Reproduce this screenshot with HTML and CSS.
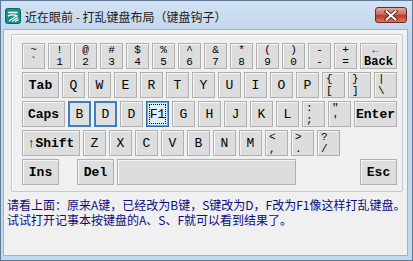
FILE: index.html
```html
<!DOCTYPE html>
<html lang="zh-CN">
  <head>
    <meta charset="UTF-8" />
    <meta name="viewport" content="width=device-width, initial-scale=1.0" />
    <title>近在眼前 - 打乱键盘布局（键盘钩子）</title>
    <link rel="stylesheet" href="styles.css">
  </head>
  <body>
    <div class="window">
      <!-- Title bar -->
      <div class="titlebar">
        <svg class="app-icon" width="16" height="16" viewBox="0 0 16 16">
          <rect x="0.5" y="0.5" width="15" height="15" rx="2" fill="#16908c" stroke="#0d6663" />
          <path d="M3 4.5 H12.5" stroke="#fff" stroke-width="1.6" fill="none" />
          <path d="M3 8 C6 6.5 9 6.5 12.5 8" stroke="#fff" stroke-width="1.4" fill="none" />
          <path d="M4 13 L12 7.5 M7 13.5 L13 9.5 M10 13.5 L13.5 11.5" stroke="#fff" stroke-width="1.3" fill="none" />
        </svg>
        <span class="title">近在眼前 - 打乱键盘布局（键盘钩子）</span>
        <div class="close-btn">
          <svg width="14" height="11" viewBox="0 0 14 11">
            <path d="M2.5 1.5 L11.5 9.5 M11.5 1.5 L2.5 9.5" stroke="#4a1612" stroke-width="3.6" stroke-linecap="square" fill="none" />
            <path d="M2.5 1.5 L11.5 9.5 M11.5 1.5 L2.5 9.5" stroke="#fff" stroke-width="2" stroke-linecap="square" fill="none" />
          </svg>
        </div>
      </div>

      <!-- Client area -->
      <div class="client">
        <div class="keyboard">
          <div class="row">
            <div class="key two"><span>~</span><span>`</span></div>
            <div class="key two"><span>!</span><span>1</span></div>
            <div class="key two"><span>@</span><span>2</span></div>
            <div class="key two"><span>#</span><span>3</span></div>
            <div class="key two"><span>$</span><span>4</span></div>
            <div class="key two"><span>%</span><span>5</span></div>
            <div class="key two"><span>^</span><span>6</span></div>
            <div class="key two"><span>&amp;</span><span>7</span></div>
            <div class="key two"><span>*</span><span>8</span></div>
            <div class="key two"><span>(</span><span>9</span></div>
            <div class="key two"><span>)</span><span>0</span></div>
            <div class="key two"><span>-</span><span>-</span></div>
            <div class="key two"><span>+</span><span>=</span></div>
            <div class="key two bold w-back"><span class="arrow">←</span><span>Back</span></div>
          </div>

          <div class="row">
            <div class="key bold w-tab">Tab</div>
            <div class="key">Q</div>
            <div class="key">W</div>
            <div class="key">E</div>
            <div class="key">R</div>
            <div class="key">T</div>
            <div class="key">Y</div>
            <div class="key">U</div>
            <div class="key">I</div>
            <div class="key">O</div>
            <div class="key">P</div>
            <div class="key two left"><span>{</span><span>[</span></div>
            <div class="key two left"><span>}</span><span>]</span></div>
            <div class="key two left"><span>|</span><span>\</span></div>
          </div>

          <div class="row">
            <div class="key bold w-caps">Caps</div>
            <div class="key hl">B</div>
            <div class="key hl">D</div>
            <div class="key">D</div>
            <div class="key focus">F1</div>
            <div class="key">G</div>
            <div class="key">H</div>
            <div class="key">J</div>
            <div class="key">K</div>
            <div class="key">L</div>
            <div class="key two left"><span>:</span><span>;</span></div>
            <div class="key two left top"><span>"</span><span>'</span></div>
            <div class="key bold w-enter">Enter</div>
          </div>

          <div class="row">
            <div class="key bold w-shift">↑Shift</div>
            <div class="key">Z</div>
            <div class="key">X</div>
            <div class="key">C</div>
            <div class="key">V</div>
            <div class="key">B</div>
            <div class="key">N</div>
            <div class="key">M</div>
            <div class="key two left"><span>&lt;</span><span>,</span></div>
            <div class="key two left"><span>&gt;</span><span>.</span></div>
            <div class="key two left"><span>?</span><span>/</span></div>
          </div>

          <div class="row">
            <div class="key bold w-tab">Ins</div>
            <div class="key bold w-tab del">Del</div>
            <div class="key w-space"></div>
            <div class="key bold w-tab esc">Esc</div>
          </div>
        </div>

        <p class="hint">请看上面：原来A键，已经改为B键，S键改为D，F改为F1像这样打乱键盘。<br>试试打开记事本按键盘的A、S、F就可以看到结果了。</p>
      </div>
    </div>
  </body>
</html>
```

FILE: styles.css
```css
body {
  margin: 0;
  padding: 0;
  font-family: "Liberation Mono", monospace;
}

.window {
  width: 413px;
  height: 261px;
  box-sizing: border-box;
  display: flex;
  flex-direction: column;
  padding: 0 4px 4px 2px;
  background: linear-gradient(#d3e2f3, #c2d6ed 30px, #c4d7ec);
  border: 1px solid #5f7a98;
}

/* Title bar */
.titlebar {
  height: 28px;
  display: flex;
  align-items: center;
}

.app-icon {
  margin-left: 2px;
  margin-top: 2px;
}

.title {
  margin-left: 4px;
  margin-top: 2px;
  font-family: "Noto Sans CJK SC", sans-serif;
  font-size: 12px;
  color: #1c1c1c;
}

.close-btn {
  margin-left: auto;
  margin-right: 1px;
  align-self: flex-start;
  margin-top: 6px;
  width: 32px;
  height: 16px;
  box-sizing: border-box;
  border: 1px solid #6e2b24;
  border-radius: 3px;
  background: linear-gradient(#e7a89c, #cf6655 45%, #b83a2a 55%, #d77a66);
  display: flex;
  align-items: center;
  justify-content: center;
}

/* Client area */
.client {
  flex: 1;
  background-color: #f0f0f0;
  border: 1px solid #9fb3c9;
}

.keyboard {
  width: 392px;
  height: 158px;
  box-sizing: border-box;
  margin: 4px 0 0 7px;
  padding: 8px 5px 0 10px;
  border: 1px solid #c4c9cd;
  border-radius: 2px;
  box-shadow: inset 1px 1px 0 #fff;
}

.row {
  display: flex;
  gap: 3px;
  height: 26px;
  margin-bottom: 3px;
}

.key {
  width: 23px;
  height: 26px;
  box-sizing: border-box;
  display: flex;
  align-items: center;
  justify-content: center;
  background-color: #dddddd;
  border: 1px solid #b0b0b0;
  box-shadow: inset 1px 1px 0 #f5f5f5;
  font-size: 13px;
  color: #000;
}

.key.two {
  flex-direction: column;
  font-size: 11px;
  line-height: 12px;
}

.key.left {
  align-items: flex-start;
  padding-left: 3px;
}

.key.top {
  justify-content: flex-start;
}

.bold {
  font-weight: bold;
}

.key.bold.two {
  font-size: 12px;
}

.arrow {
  font-size: 10px;
  line-height: 11px;
  font-weight: normal;
  margin-right: 6px;
}

.w-back {
  width: 37px;
}

.w-tab {
  width: 37px;
}

.w-caps {
  width: 43px;
}

.w-enter {
  width: 43px;
}

.w-shift {
  width: 58px;
}

.w-space {
  width: 179px;
}

.del {
  margin-left: 15px;
}

.esc {
  margin-left: auto;
}

/* Remapped keys */
.key.hl {
  border: 2px solid #3a7fc0;
  box-shadow: none;
  background-color: #e0e0e0;
}

.key.focus {
  position: relative;
  border: 1px solid #2b6aa6;
  box-shadow: inset 0 0 0 1px #62ade6;
  background-color: #e2eefa;
}

.key.focus::after {
  content: "";
  position: absolute;
  top: 2px;
  left: 2px;
  right: 2px;
  bottom: 2px;
  border: 1px dotted #000;
}

.hint {
  margin: 5px 0 0 3px;
  font-family: "Noto Sans CJK SC", sans-serif;
  font-size: 12px;
  line-height: 15px;
  color: #0c0c7c;
}
```
